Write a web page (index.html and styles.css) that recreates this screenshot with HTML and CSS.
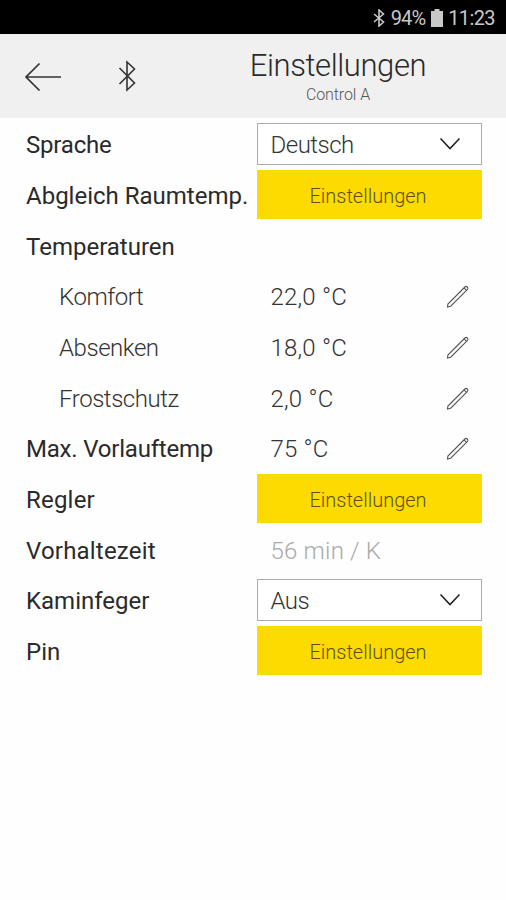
FILE: index.html
```html
<!DOCTYPE html>
<html lang="de">
<head>
    <meta charset="UTF-8">
    <meta name="viewport" content="width=device-width, initial-scale=1.0">
    <title>Einstellungen</title>
    <link rel="stylesheet" href="styles.css">
</head>
<body>
    <!-- Shared icons -->
    <svg class="icon-defs" width="0" height="0">
        <symbol id="icon-chevron" viewBox="0 0 22 14"><path d="M1.5 1.5 11 11.5 20.5 1.5"/></symbol>
        <symbol id="icon-pencil" viewBox="0 0 24 24"><path d="M1.5 22 1.9 19 18.9 2Q20 .9 21.3 2 22.6 3.2 21.5 4.4L4.7 21.2ZM18 2.9 20.6 5.3"/></symbol>
    </svg>

    <div class="status-bar">
        <svg class="status-bluetooth" viewBox="0 0 12 18"><path d="M1 5 10.5 13 6 17V1L10.5 5 1 13"/></svg>
        <span class="battery-level">94%</span>
        <svg class="status-battery" viewBox="0 0 12 18"><path d="M3.5 0h5v2H12v16H0V2h3.5z"/></svg>
        <span class="clock">11:23</span>
    </div>

    <div class="header">
        <svg class="back" viewBox="0 0 38 30"><path d="M15.5 1.5 2 15 15.5 28.5M2 15H37"/></svg>
        <svg class="bluetooth" viewBox="0 0 18 32"><path d="M1.5 8 16.5 23 9 30V2L16.5 9 1.5 24"/></svg>
        <div class="heading">
            <h1>Einstellungen</h1>
            <p>Control A</p>
        </div>
    </div>

    <div class="settings">
        <div class="row">
            <div class="label tight">Sprache</div>
            <div class="select"><span>Deutsch</span><svg class="chevron"><use href="#icon-chevron"/></svg></div>
        </div>
        <div class="row">
            <div class="label">Abgleich Raumtemp.</div>
            <button class="btn">Einstellungen</button>
        </div>
        <div class="row">
            <div class="label">Temperaturen</div>
        </div>
        <div class="row">
            <div class="label sub">Komfort</div>
            <div class="value"><span>22,0 °C</span><svg class="pencil"><use href="#icon-pencil"/></svg></div>
        </div>
        <div class="row">
            <div class="label sub">Absenken</div>
            <div class="value"><span>18,0 °C</span><svg class="pencil"><use href="#icon-pencil"/></svg></div>
        </div>
        <div class="row">
            <div class="label sub">Frostschutz</div>
            <div class="value"><span>2,0 °C</span><svg class="pencil"><use href="#icon-pencil"/></svg></div>
        </div>
        <div class="row">
            <div class="label tight">Max. Vorlauftemp</div>
            <div class="value"><span>75 °C</span><svg class="pencil"><use href="#icon-pencil"/></svg></div>
        </div>
        <div class="row">
            <div class="label wide">Regler</div>
            <button class="btn">Einstellungen</button>
        </div>
        <div class="row">
            <div class="label wide">Vorhaltezeit</div>
            <div class="value disabled"><span>56 min / K</span></div>
        </div>
        <div class="row">
            <div class="label">Kaminfeger</div>
            <div class="select"><span>Aus</span><svg class="chevron"><use href="#icon-chevron"/></svg></div>
        </div>
        <div class="row">
            <div class="label">Pin</div>
            <button class="btn">Einstellungen</button>
        </div>
    </div>
</body>
</html>
```
FILE: styles.css
```css
* { margin: 0; padding: 0; box-sizing: border-box; }
body { font-family: Roboto, "Open Sans", sans-serif; background: #fefefe; color: #2a2a2a; }
svg { display: block; fill: none; flex-shrink: 0; }
.icon-defs { position: absolute; }

.status-bar { height: 34px; background: #000; color: #c8c8c8; display: flex; align-items: center; justify-content: flex-end; padding: 2px 11px 0 0; font-size: 20px; }
.status-bluetooth { width: 12px; height: 18px; margin-right: 6px; stroke: #c8c8c8; stroke-width: 1.6; }
.status-battery { width: 12px; height: 18px; margin: 0 5px 0 6px; fill: #c8c8c8; }
.battery-level { letter-spacing: -0.9px; }
.clock { letter-spacing: -0.6px; }

.header { height: 84px; background: #f0f0f0; display: flex; align-items: center; padding-left: 24px; }
.back { width: 38px; height: 30px; margin-top: 1px; stroke: #333; stroke-width: 1.7; }
.bluetooth { width: 18px; height: 32px; margin-left: 56px; stroke: #333; stroke-width: 1.6; }
.heading { width: 204px; margin-left: 100px; text-align: center; }
.heading h1 { font-size: 31px; line-height: 38px; font-weight: 300; letter-spacing: -0.4px; }
.heading p { font-size: 16px; line-height: 20px; font-weight: 300; letter-spacing: -0.1px; color: #555; }

.settings { padding: 1px 24px 0 26px; }
.row { height: 50.67px; display: grid; grid-template-columns: 230.5px 225px; align-items: center; }
.label { padding-top: 2px; font-size: 24px; white-space: nowrap; }
.tight { letter-spacing: -0.2px; }
.wide { letter-spacing: 0.2px; }
.sub { padding-left: 33px; font-weight: 300; letter-spacing: -0.45px; color: #333; }
.select { height: 42px; border: 1.5px solid #aaa; background: #fff; display: flex; align-items: center; justify-content: space-between; padding: 2px 20px 0 13px; font-size: 24px; font-weight: 300; letter-spacing: -0.5px; color: #333; }
.chevron { width: 22px; height: 14px; margin-top: -2px; stroke: #222; stroke-width: 1.6; }
.value { display: flex; align-items: center; justify-content: space-between; padding: 2px 12px 0 14px; font-size: 24px; font-weight: 300; letter-spacing: 0.2px; color: #333; }
.pencil { width: 24px; height: 24px; stroke: #555; stroke-width: 1.1; }
.disabled { color: #aaa; }
.btn { height: 49px; border: none; background: #fddb00; color: #5c5112; font-family: inherit; font-size: 20px; font-weight: 300; padding: 3px 2px 0 0; }
```
